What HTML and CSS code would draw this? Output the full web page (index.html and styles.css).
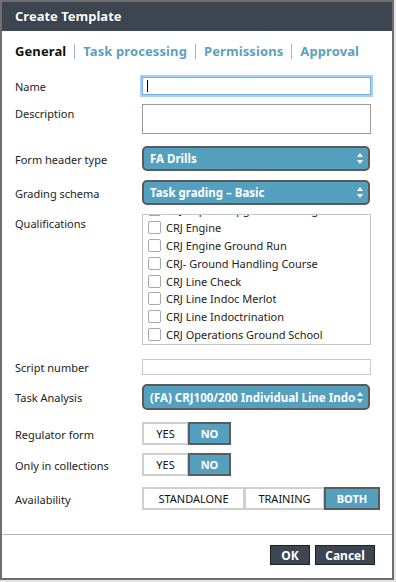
FILE: index.html
```html
<!DOCTYPE html>
<html lang="en">
<head>
    <meta charset="UTF-8">
    <meta name="viewport" content="width=device-width, initial-scale=1.0">
    <title>Create Template</title>
    <link rel="stylesheet" href="styles.css">
</head>
<body>

    <div class="dialog">
        <div class="dialog-header">Create Template</div>

        <div class="tabs">
            <span class="tab active">General</span>
            <span class="tab-sep"></span>
            <span class="tab">Task processing</span>
            <span class="tab-sep"></span>
            <span class="tab">Permissions</span>
            <span class="tab-sep"></span>
            <span class="tab">Approval</span>
        </div>

        <div class="form">
            <div class="row row-name">
                <label>Name</label>
                <div class="text-input focused"><span class="caret"></span></div>
            </div>

            <div class="row row-top">
                <label>Description</label>
                <div class="text-area"></div>
            </div>

            <div class="row row-form-header">
                <label>Form header type</label>
                <div class="select">
                    <span class="select-value">FA Drills</span>
                    <svg class="select-arrows" width="6" height="11" viewBox="0 0 6 11"><path d="M3 0 L6 4 L0 4 Z M3 11 L6 7 L0 7 Z" fill="#fff"/></svg>
                </div>
            </div>

            <div class="row">
                <label>Grading schema</label>
                <div class="select">
                    <span class="select-value">Task grading &ndash; Basic</span>
                    <svg class="select-arrows" width="6" height="11" viewBox="0 0 6 11"><path d="M3 0 L6 4 L0 4 Z M3 11 L6 7 L0 7 Z" fill="#fff"/></svg>
                </div>
            </div>

            <div class="row row-top">
                <label class="label-quals">Qualifications</label>
                <div class="check-list">
                    <ul>
                        <li><span class="check"></span>CRJ Captain Upgrade Training</li>
                        <li><span class="check"></span>CRJ Engine</li>
                        <li><span class="check"></span>CRJ Engine Ground Run</li>
                        <li><span class="check"></span>CRJ- Ground Handling Course</li>
                        <li><span class="check"></span>CRJ Line Check</li>
                        <li><span class="check"></span>CRJ Line Indoc Merlot</li>
                        <li><span class="check"></span>CRJ Line Indoctrination</li>
                        <li><span class="check"></span>CRJ Operations Ground School</li>
                    </ul>
                </div>
            </div>

            <div class="row row-script">
                <label>Script number</label>
                <div class="text-input small"></div>
            </div>

            <div class="row">
                <label>Task Analysis</label>
                <div class="select tall">
                    <span class="select-value">(FA) CRJ100/200 Individual Line Indoctrination</span>
                    <svg class="select-arrows" width="6" height="11" viewBox="0 0 6 11"><path d="M3 0 L6 4 L0 4 Z M3 11 L6 7 L0 7 Z" fill="#fff"/></svg>
                </div>
            </div>

            <div class="row row-regulator">
                <label>Regulator form</label>
                <div class="toggle">
                    <span class="toggle-btn yes">YES</span>
                    <span class="toggle-btn no selected">NO</span>
                </div>
            </div>

            <div class="row row-collections">
                <label>Only in collections</label>
                <div class="toggle">
                    <span class="toggle-btn yes">YES</span>
                    <span class="toggle-btn no selected">NO</span>
                </div>
            </div>

            <div class="row row-availability">
                <label>Availability</label>
                <div class="toggle">
                    <span class="toggle-btn standalone">STANDALONE</span>
                    <span class="toggle-btn training">TRAINING</span>
                    <span class="toggle-btn both selected">BOTH</span>
                </div>
            </div>
        </div>

        <div class="dialog-footer">
            <button class="btn btn-ok">OK</button>
            <button class="btn btn-cancel">Cancel</button>
        </div>
    </div>

</body>
</html>
```

FILE: styles.css
```css
* {
    box-sizing: border-box;
}
body {
    margin: 0;
    padding: 0;
    background-color: #e6e6e6;
    font-family: "Noto Sans", "DejaVu Sans", sans-serif;
    font-size: 11px;
    color: #222;
}
.dialog {
    width: 394px;
    height: 580px;
    background-color: #fff;
    border: 2px solid #6f6f6f;
    display: flex;
    flex-direction: column;
}
.dialog-header {
    height: 29px;
    background-color: #3c4550;
    color: #fff;
    font-weight: bold;
    font-size: 13px;
    line-height: 29px;
    padding-left: 13px;
    text-shadow: 0 0 1px rgba(0, 0, 0, 0.6);
}
.tabs {
    display: flex;
    align-items: center;
    padding-left: 13px;
    margin-top: 10px;
    height: 20px;
}
.tab {
    font-size: 13px;
    font-weight: bold;
    color: #5c9fc0;
    letter-spacing: 0.1px;
}
.tab.active {
    color: #111;
}
.tab-sep {
    width: 1px;
    height: 15px;
    background-color: #9bb6c6;
    margin: 0 8px;
}
.form {
    display: flex;
    flex-direction: column;
    gap: 9px;
    padding-left: 13px;
    margin-top: 16px;
}
.row {
    display: flex;
    align-items: center;
}
.row label {
    width: 127px;
    flex-shrink: 0;
    padding-top: 1px;
}
.row-top {
    align-items: flex-start;
}
.row-top label {
    padding-top: 2px;
}
.row-form-header {
    margin-top: 3px;
}
.row-script {
    margin-top: 5px;
}
.row-regulator {
    margin-top: 3px;
}
.row-collections {
    margin-top: -1px;
}
.row-availability {
    margin-top: 2px;
}
.text-input {
    width: 229px;
    height: 18px;
    border: 1px solid #aaa;
    display: flex;
    align-items: center;
    padding-left: 4px;
}
.text-input.focused {
    border-color: #7aaee0;
    box-shadow: 0 0 0 2px #a9cff4;
}
.text-input.small {
    height: 16px;
    border-color: #c9c9c9;
}
.caret {
    width: 1px;
    height: 12px;
    background-color: #000;
}
.text-area {
    width: 229px;
    height: 30px;
    border: 1px solid #9a9a9a;
}
.select {
    width: 228px;
    height: 25px;
    border: 2px solid #5a5a5a;
    border-radius: 5px;
    background-color: #55a0bf;
    display: flex;
    align-items: center;
    padding-left: 6px;
    padding-right: 5px;
    overflow: hidden;
}
.select.tall {
    height: 26px;
}
.select-value {
    flex: 1;
    color: #fff;
    font-weight: bold;
    font-size: 11.5px;
    white-space: nowrap;
    overflow: hidden;
}
.select-arrows {
    flex-shrink: 0;
    margin-left: 1px;
}
.check-list {
    width: 229px;
    height: 131px;
    border: 1px solid #c4c4c4;
    overflow: hidden;
}
.check-list ul {
    list-style: none;
    margin: -14px 0 0 0;
    padding: 0 0 0 5px;
}
.check-list li {
    height: 17.8px;
    display: flex;
    align-items: center;
    white-space: nowrap;
}
.check {
    width: 13px;
    height: 13px;
    border: 1px solid #a8a8a8;
    border-radius: 2px;
    background-color: #fff;
    margin-right: 5px;
    flex-shrink: 0;
}
.toggle {
    display: flex;
    height: 23px;
}
.toggle-btn {
    display: flex;
    align-items: center;
    justify-content: center;
    border: 2px solid #cfcfcf;
    color: #111;
    font-size: 11px;
}
.toggle-btn + .toggle-btn {
    margin-left: -1px;
}
.toggle-btn.selected {
    background-color: #55a0bf;
    border-color: #5b5b5b;
    color: #fff;
    font-weight: bold;
}
.yes {
    width: 47px;
}
.no {
    width: 43px;
}
.standalone {
    width: 103px;
}
.training {
    width: 81px;
}
.both {
    width: 56px;
}
.dialog-footer {
    margin-top: auto;
    border-top: 1px solid #b5b5b5;
    height: 44px;
    display: flex;
    justify-content: flex-end;
    align-items: flex-start;
    gap: 5px;
    padding-top: 10px;
    padding-right: 17px;
}
.btn {
    height: 20px;
    padding: 0;
    background-color: #3c4550;
    border: 1px solid #1d2127;
    color: #fff;
    font-family: "Noto Sans", "DejaVu Sans", sans-serif;
    font-weight: bold;
    font-size: 12px;
    cursor: pointer;
}
.btn-ok {
    width: 40px;
}
.btn-cancel {
    width: 60px;
}
```
